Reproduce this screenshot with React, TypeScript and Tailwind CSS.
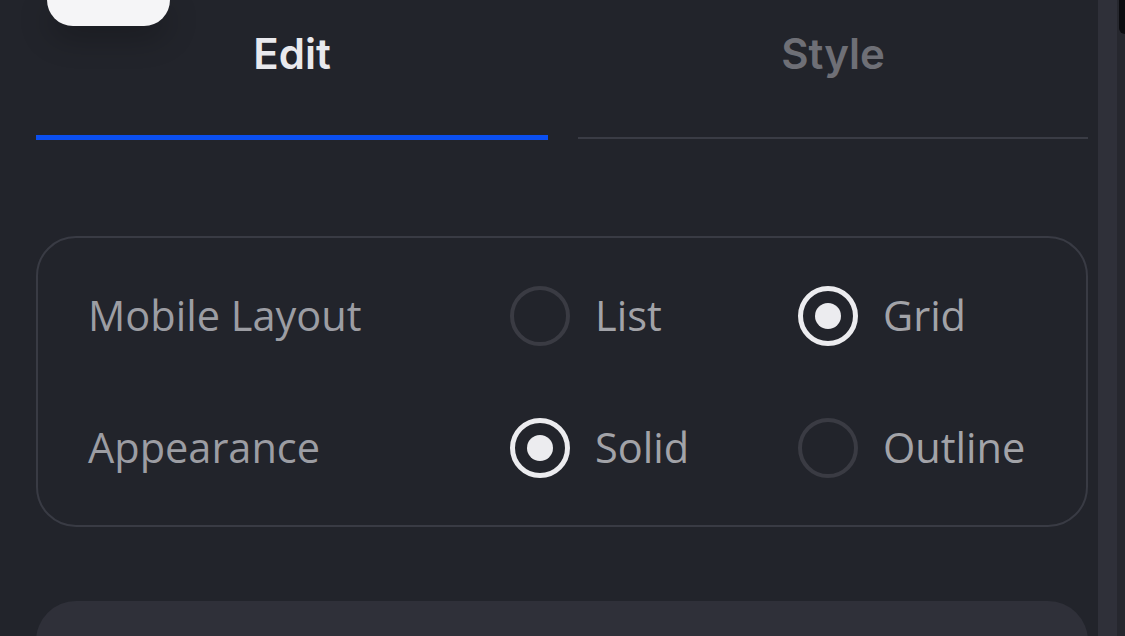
import { useState } from 'react';

type Option = { value: string; label: string };

type SettingRow = {
    key: string;
    label: string;
    options: [Option, Option];
};

const rows: SettingRow[] = [
    {
        key: 'layout',
        label: 'Mobile Layout',
        options: [
            { value: 'list', label: 'List' },
            { value: 'grid', label: 'Grid' },
        ],
    },
    {
        key: 'appearance',
        label: 'Appearance',
        options: [
            { value: 'solid', label: 'Solid' },
            { value: 'outline', label: 'Outline' },
        ],
    },
];

function Radio({ checked }: { checked: boolean }) {
    return checked ? (
        <span className="flex h-[60px] w-[60px] shrink-0 items-center justify-center rounded-full border-[5px] border-[#ececef]">
            <span className="h-[26px] w-[26px] rounded-full bg-[#ececef]" />
        </span>
    ) : (
        <span className="h-[60px] w-[60px] shrink-0 rounded-full border-[4px] border-[#3a3b43]" />
    );
}

export default function App() {
    const [tab, setTab] = useState<'edit' | 'style'>('edit');
    const [values, setValues] = useState<Record<string, string>>({
        layout: 'grid',
        appearance: 'solid',
    });

    return (
        <div className="flex h-[636px] w-[1125px] overflow-hidden bg-[#22242b] font-['Open_Sans',sans-serif]">
            <div className="flex w-[1098px] flex-col pl-[36px] pr-[10px]">
                <div className="ml-[11px] h-[26px] w-[123px] shrink-0 rounded-b-[30px] bg-[#f5f5f7] shadow-[0_12px_30px_rgba(0,0,0,0.25)]" />

                <div className="mt-[3px] grid shrink-0 grid-cols-[512px_510px] gap-[30px]">
                    {(['edit', 'style'] as const).map((t) => {
                        const active = tab === t;
                        return (
                            <button
                                key={t}
                                onClick={() => setTab(t)}
                                className="flex h-[111px] flex-col items-stretch justify-between"
                            >
                                <span
                                    className={`font-['Inter',sans-serif] text-[42px] leading-[50px] font-semibold ${
                                        active ? 'text-[#e9e9ed]' : 'text-[#6e6f76]'
                                    }`}
                                >
                                    {t === 'edit' ? 'Edit' : 'Style'}
                                </span>
                                {active ? (
                                    <span className="h-[5px] bg-[#0b4ff0]" />
                                ) : (
                                    <span className="mb-[1px] h-[2px] bg-[#3a3c45]" />
                                )}
                            </button>
                        );
                    })}
                </div>

                <div className="mt-[96px] flex shrink-0 flex-col gap-[72px] rounded-[40px] border-2 border-[#393b44] pt-[48px] pb-[47px] pl-[50px]">
                    {rows.map((row) => (
                        <div key={row.key} className="grid h-[60px] grid-cols-[422px_288px_1fr] items-center">
                            <span className="text-[41.5px] leading-none text-[#9c9da3]">{row.label}</span>
                            {row.options.map((opt) => (
                                <button
                                    key={opt.value}
                                    onClick={() => setValues({ ...values, [row.key]: opt.value })}
                                    className="flex items-center gap-[25px]"
                                >
                                    <Radio checked={values[row.key] === opt.value} />
                                    <span className="text-[41.5px] leading-none text-[#a2a3a8]">{opt.label}</span>
                                </button>
                            ))}
                        </div>
                    ))}
                </div>

                <div className="mt-[74px] h-[120px] shrink-0 rounded-[40px] bg-[#2f3039]" />
            </div>

            <div className="w-[19px] bg-[#2f3039]" />
            <div className="relative w-[8px] bg-[#26272e]">
                <div className="absolute right-0 top-0 h-[34px] w-[6px] rounded-bl-full bg-[#0c0c10]" />
            </div>
        </div>
    );
}
